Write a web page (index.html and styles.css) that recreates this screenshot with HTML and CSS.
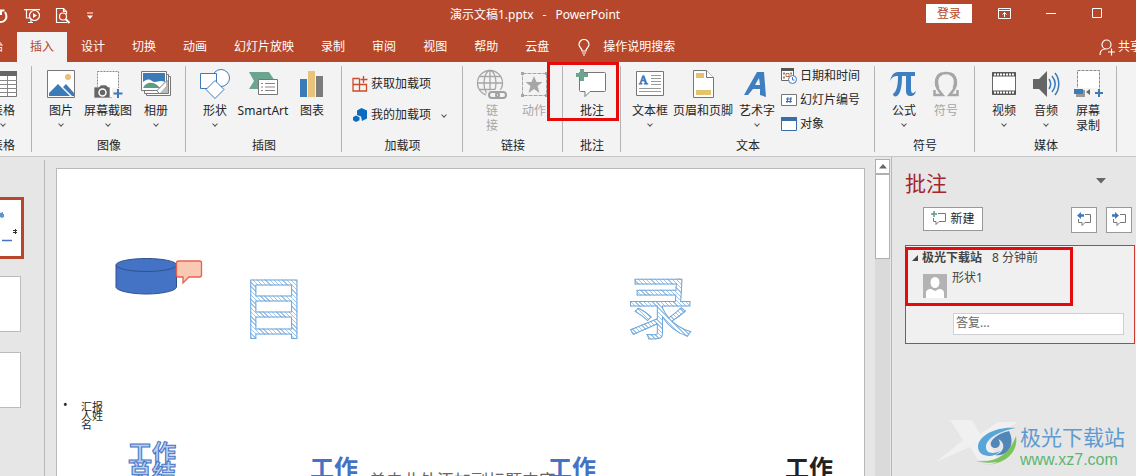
FILE: index.html
```html
<!DOCTYPE html>
<html lang="zh-CN">
<head>
<meta charset="utf-8">
<title>演示文稿1.pptx - PowerPoint</title>
<link rel="stylesheet" href="styles.css">
</head>
<body>
<header class="titlebar">
  <div class="quick">
    <button class="bare" aria-label="重复"><svg width="16" height="16" fill="none" stroke="#fff" stroke-width="2"><path d="M3 4C0 8 2 14 8 14s8-5 5-10M8 2.500h4.500M9 7V2"/></svg></button>
    <button class="bare" aria-label="放映"><svg width="17" height="16" fill="none" stroke="#fff" stroke-width="1.2"><path d="M0 1.6h16M2.5 2v8H6M4 14.5h5M7 11v3"/><circle cx="10.5" cy="7.500" r="5"/><path d="M9 5v5l4-2.500z" fill="#fff" stroke="none"/></svg></button>
    <button class="bare" aria-label="打印预览"><svg width="16" height="16" fill="none" stroke="#fff" stroke-width="1.2"><path d="M12 14.500H1.500v-14h7l3 3V6M8.500.500v3h3"/><circle cx="8" cy="8.500" r="3.500"/><path d="M10.500 11l4 4" stroke-width="2.200"/></svg></button>
    <button class="bare" aria-label="自定义"><svg width="8" height="8"><path d="M1 1h6" stroke="#fff"/><path d="M1 3.500h6L4 7z" fill="#fff"/></svg></button>
  </div>
  <div class="doc-title"><span>演示文稿1.pptx</span><span>-</span><span>PowerPoint</span></div>
  <button class="login">登录</button>
  <div class="window-buttons">
    <button class="bare" aria-label="功能区选项"><svg width="13" height="11" fill="none" stroke="#fff"><path d="M.5.500h12v10H.5zM.5 2.500h12M6.500 9V4.500M4.500 6.500l2-2 2 2"/></svg></button>
    <button class="bare" aria-label="最小化"><svg width="11" height="11"><path d="M0 5.500h10" stroke="#fff"/></svg></button>
    <button class="bare" aria-label="最大化"><svg width="11" height="11"><path d="M.5.500h9v9H.5z" fill="none" stroke="#fff"/></svg></button>
  </div>
</header>
<nav class="tabs">
  <button class="tab">开始</button>
  <button class="tab active">插入</button>
  <button class="tab">设计</button>
  <button class="tab">切换</button>
  <button class="tab">动画</button>
  <button class="tab">幻灯片放映</button>
  <button class="tab">录制</button>
  <button class="tab">审阅</button>
  <button class="tab">视图</button>
  <button class="tab">帮助</button>
  <button class="tab">云盘</button>
  <button class="tell"><svg width="13" height="17" fill="none" stroke="#fff" stroke-width="1.200"><path d="M4 12c0-3-3-3.500-3-6.500a5 5 0 0 1 10 0C11 8.500 8 9 8 12zM4 14h4M5 16h2"/></svg>操作说明搜索</button>
  <button class="share"><svg width="16" height="17" fill="none" stroke="#fff" stroke-width="1.200"><circle cx="7.500" cy="5.500" r="4.500"/><path d="M1 16c0-4 2.500-6 5.500-6M12.500 9.500v7M9 13h7"/></svg>共享</button>
</nav>
<section class="ribbon">
  <div class="group first">
    <div class="tools">
      <button class="tool"><svg width="32" height="32"><path d="M2.500 2.500h27v25h-27z" fill="#fff" stroke="#777"/><path d="M2 2h28v5H2z" fill="#666"/><path d="M2 11.500h28M2 15.500h28M2 19.500h28M2 23.500h28M11.500 7v20M20.500 7v20" stroke="#888"/></svg><span>表格</span><i class="chev"></i></button>
    </div>
    <div class="caption">表格</div>
  </div>
  <div class="group">
    <div class="tools">
      <button class="tool"><svg width="32" height="32"><path d="M2.500 1.500h27v27h-27z" fill="#fff" stroke="#777"/><circle cx="23" cy="8" r="3" fill="#eabf7a"/><path d="M4 27v-3l9-9 12 12zM18 18l3-3 8 9v3h-2z" fill="#3d7ab8"/></svg><span>图片</span><i class="chev"></i></button>
      <button class="tool wide"><svg width="32" height="32"><path d="M5.500 2.500h21v26h-21z" fill="#fff" stroke="#888" stroke-dasharray="2 1"/><path d="M2 18h5l2-2h5l2 2h2v11H2z" fill="#666" stroke="#f3f3f3" stroke-width=".7"/><circle cx="10.500" cy="23.500" r="3.500" fill="#666" stroke="#fff" stroke-width="1.500"/><path d="M20 19h10v11H20z" fill="#f3f3f3"/><path d="M26 20v9M21.500 24.500h9" stroke="#3d7ab8" stroke-width="2"/></svg><span>屏幕截图</span><i class="chev"></i></button>
      <button class="tool mid"><svg width="32" height="32"><path d="M6.500 7.500h24v19h-24z" fill="#fff" stroke="#777"/><path d="M4.500 5.500h24v19h-24z" fill="#fff" stroke="#777"/><path d="M1.500 2.500h25v19h-25z" fill="#fff" stroke="#777"/><path d="M3 4h22v9c-6-3-9 2-13-1s-6-1-9 1z" fill="#3d7ab8"/><path d="M3 19c4-8 12-5 14-3s3 2 3 3z" fill="#5b9c86"/><path d="M17 21.500l10-10v13h-8z" fill="#fff" stroke="#777"/><path d="M20 24l7-8v8z" fill="#bbb"/></svg><span>相册</span><i class="chev"></i></button>
    </div>
    <div class="caption">图像</div>
  </div>
  <div class="group">
    <div class="tools">
      <button class="tool"><svg width="32" height="32" fill="#fff" stroke="#3d7ab8"><circle cx="22" cy="9" r="8.500"/><path d="M1.500 4.500h16v15h-16z"/><path d="M16 11.500l9 9-9 9-9-9z"/></svg><span>形状</span><i class="chev"></i></button>
      <button class="tool smart"><svg width="32" height="32"><path d="M2 3h20l6 9-6 8H2l5-8z" fill="#6ba48f"/><path d="M11.500 10.500h19v15h-19z" fill="#fff" stroke="#777"/><path d="M14 14.500h2m2 0h10M14 18h2m2 0h10M14 21.500h2m2 0h10" stroke="#888"/></svg><span>SmartArt</span></button>
      <button class="tool mid"><svg width="32" height="32"><path d="M4 10h7v18H4z" fill="#3d7ab8"/><path d="M12 2h7v26h-7z" fill="#e9c37a"/><path d="M20 7h7v21h-7z" fill="#7c7c7c"/></svg><span>图表</span></button>
    </div>
    <div class="caption">插图</div>
  </div>
  <div class="group addins">
    <div class="rows loose">
      <button class="row"><svg width="16" height="16" fill="none" stroke="#d04a27" stroke-width="1.300"><path d="M7.500 2.500H1V15h13.500V8.500H1M7.500 2.500V15M11.500 0v7M8.500 3.500h7"/></svg>获取加载项</button>
      <button class="row"><svg width="16" height="16" fill="#0a6cc0"><path d="M9.500 1L15 3.500v8L10 14l-1-4.500L5 8V3.500z"/><path d="M4 8.500l3.500 1.700v3L4 15l-3-1.800v-3z"/></svg>我的加载项<i class="chev side"></i></button>
    </div>
    <div class="caption">加载项</div>
  </div>
  <div class="group">
    <div class="tools">
      <button class="tool off" disabled><svg width="32" height="32" fill="none" stroke="#a6a6a6" stroke-width="1.300"><circle cx="14" cy="14" r="12.500"/><ellipse cx="14" cy="14" rx="6" ry="12.500"/><path d="M14 1.500v25M1.500 14h25M3 7.500h22M3 20.500h16"/><g stroke="#f3f3f3" stroke-width="6"><rect x="13" y="24" width="10" height="5" rx="2.500"/><rect x="20" y="24" width="10" height="5" rx="2.500"/></g><g stroke="#a0a0a0" stroke-width="2"><rect x="13" y="23" width="10" height="6" rx="3"/><rect x="20" y="23" width="10" height="6" rx="3"/></g></svg><span>链<br>接</span></button>
      <button class="tool off" disabled><svg width="32" height="32" fill="#a6a6a6"><path d="M4.500 4.500h24v22h-24z" fill="none" stroke="#a6a6a6" stroke-dasharray="4 1"/><path d="M3 3h3v3H3zM27 3h3v3h-3zM3 25h3v3H3zM27 25h3v3h-3z"/><path d="M16 7l2.500 6h6l-5 4 2 7-5.500-4-5.500 4 2-7-5-4h6z"/></svg><span>动作</span></button>
    </div>
    <div class="caption">链接</div>
  </div>
  <div class="group marked">
    <div class="tools">
      <button class="tool"><svg width="32" height="32"><path d="M4.500 3.500h24a1 1 0 0 1 1 1v17a1 1 0 0 1-1 1H14l-5 5v-5H4.500a1 1 0 0 1-1-1v-18z" fill="#fff" stroke="#777"/><path d="M4 0h4v4h4v4H8v4H4V8H0V4h4z" fill="#6ba48f"/></svg><span>批注</span></button>
    </div>
    <div class="caption">批注</div>
  </div>
  <div class="group">
    <div class="tools">
      <button class="tool"><svg width="32" height="32"><path d="M2.500 2.500h27v24h-27z" fill="#fff" stroke="#777"/><text x="5" y="15" class="glyph-a">A</text><path d="M17 6.500h10M17 9.500h10M17 12.500h10M17 15.500h10M5 19.500h22M5 22.500h22" stroke="#999"/></svg><span>文本框</span><i class="chev"></i></button>
      <button class="tool hf"><svg width="32" height="32"><path d="M6.500 1.500h13l7 7v20h-20z" fill="#fff" stroke="#777"/><path d="M19.500 1.500v7h7" fill="#fff" stroke="#777"/><path d="M9 4h8v5H9zM9 21h15v5H9z" fill="#e3c36e"/></svg><span>页眉和页脚</span></button>
      <button class="tool mid"><svg width="32" height="32"><path d="M16 3h7l2 25-6-2v-6h-7l-5 6H3zM18 9l-4 7h5z" fill="#3d7fc1" fill-rule="evenodd"/></svg><span>艺术字</span><i class="chev"></i></button>
      <div class="rows text-rows">
        <button class="row"><svg width="16" height="16"><path d="M.5 1.500h12v11H.5z" fill="#fff" stroke="#666"/><path d="M0 0h13v3H0z" fill="#555"/><path d="M2 5.500h2m5 0h2M2 9.500h2" stroke="#888" stroke-width="2"/><path d="M5 5.500h3v3H5z" fill="none" stroke="#d07030"/><circle cx="11.500" cy="11.500" r="4" fill="#fff" stroke="#3d7ab8"/><path d="M11.500 9v3h2" fill="none" stroke="#3d7ab8"/></svg>日期和时间</button>
        <button class="row"><svg width="16" height="16"><path d="M.5 2.500h15v11H.5z" fill="#fff" stroke="#777"/><path d="M5 7h6M5 9.500h6M7 5l-1 6M10 5l-1 6" stroke="#3d6ab0"/></svg>幻灯片编号</button>
        <button class="row"><svg width="16" height="16"><path d="M.5 1.500h15v13H.5z" fill="#fff" stroke="#3c6ca8"/><path d="M0 1h16v4H0z" fill="#3c6ca8"/></svg>对象</button>
      </div>
    </div>
    <div class="caption">文本</div>
  </div>
  <div class="group">
    <div class="tools">
      <button class="tool"><svg width="32" height="32" fill="#3d7fc1"><path d="M2 12C4 5 6 3 11 3h16v4h-4v13c0 5 2 5 5 2-1 4-3 5-5 5-4 0-5-2-5-6V7h-4c0 9-1 17-5 20-2 1-4 0-4-2 4-3 5-9 5-18-4 0-6 1-8 5z"/></svg><span>公式</span><i class="chev"></i></button>
      <button class="tool off" disabled><svg width="32" height="32" fill="none" stroke="#a6a6a6"><path d="M4.500 21v5h8C9 22 6 19 6 14 6 8 10 4 16 4s10 4 10 10c0 5-3 8-6.500 12h8v-5" stroke-width="2.500"/><path d="M8 19C5 11 8 5 12 5M24 19c3-8 0-14-4-14" stroke-width="3"/></svg><span>符号</span></button>
    </div>
    <div class="caption">符号</div>
  </div>
  <div class="group">
    <div class="tools">
      <button class="tool"><svg width="32" height="32"><path d="M4.500 3.500h23v22h-23z" fill="#fff" stroke="#666"/><path d="M4 5.500h24M4 23.500h24" stroke="#555" stroke-width="4"/><path d="M6 5.500h21M6 23.500h21" stroke="#fff" stroke-width="2" stroke-dasharray="2 1"/></svg><span>视频</span><i class="chev"></i></button>
      <button class="tool"><svg width="32" height="32"><path d="M3 10h6l8-8v26l-8-8H3z" fill="#666"/><path d="M19 10c2 3 2 7 0 10M22 7c4 5 4 11 0 16M25 4c5 6 5 16 0 22" fill="none" stroke="#3d7ab8" stroke-width="1.500"/></svg><span>音频</span><i class="chev"></i></button>
      <button class="tool"><svg width="32" height="32"><path d="M5.500 1.500h22v22h-22z" fill="#fff" stroke="#888" stroke-dasharray="3 1"/><path d="M2 19h24v11H2z" fill="#f3f3f3"/><path d="M4 21h9v7H4z" fill="#999"/><path d="M2 20h9v5H2z" fill="#3d7ab8"/><path d="M14 23l4-3v6z" fill="#666"/><path d="M27 20v8M23 24h8" stroke="#3d7ab8" stroke-width="2"/></svg><span>屏幕<br>录制</span></button>
    </div>
    <div class="caption">媒体</div>
  </div>
</section>
<main class="work">
  <aside class="thumbs">
    <div class="thumb selected"><svg width="20" height="54"><path d="M0 13l3-1v2h1v3l-2 1-2-1z" fill="#5b93d3"/><path d="M2 40.500h10" stroke="#4472c4" stroke-width="1.500"/><path d="M13 30.500h4M13 32.500h4M15.500 29v5" stroke="#333"/></svg></div>
    <div class="thumb"></div>
    <div class="thumb"></div>
  </aside>
  <div class="canvas">
    <div class="slide">
      <svg class="shape" width="90" height="40"><path d="M1 8v22c0 3.500 14 7 30.500 7s30-3.500 30-7V8" fill="#4472c4" stroke="#2f528f"/><ellipse cx="31.300" cy="8" rx="30.300" ry="6.500" fill="#4472c4" stroke="#2f528f"/><path d="M63.500 4h21a2 2 0 0 1 2 2v12a2 2 0 0 1-2 2H74l-6 6v-6h-4.500a2 2 0 0 1-2-2V6a2 2 0 0 1 2-2z" fill="#f9c9b4" stroke="#e8614d" stroke-width="1.300"/></svg>
      <div class="hatch one">目</div>
      <div class="hatch two">录</div>
      <div class="dot">•</div>
      <div class="reporter">汇报<br>人姓<br>名</div>
      <div class="work-title outlined">工作<br>总结</div>
      <div class="hint">单击此处添加副标题内容</div>
      <div class="work-title second">工作</div>
      <div class="work-title third">工作</div>
      <div class="work-title fourth">工作</div>
    </div>
  </div>
  <div class="scroll">
    <button class="scroll-up" aria-label="向上滚动"><svg width="8" height="5"><path d="M0 4.500L4 0l4 4.500z" fill="#666"/></svg></button>
    <div class="scroll-thumb"></div>
  </div>
  <aside class="pane">
    <div class="pane-head"><h2>批注</h2><button class="bare" aria-label="窗格选项"><svg width="10" height="6"><path d="M0 0h10L5 5.500z" fill="#666"/></svg></button></div>
    <div class="pane-tools">
      <button class="new"><svg width="16" height="16" fill="none"><path d="M7 2.500h7.500v8H8l-3 3v-3H2.500V7" stroke="#777"/><path d="M3 0v6M0 3h6" stroke="#5b9c86" stroke-width="1.500"/></svg>新建</button>
      <button class="step" aria-label="上一条"><svg width="16" height="16" fill="none"><path d="M9 2.500h5.500v8H9l-3 3v-3H2.500V7" stroke="#777"/><path d="M1 3.500L5 0v2.200h3v2.600H5V7z" fill="#3d7ab8"/></svg></button>
      <button class="step" aria-label="下一条"><svg width="16" height="16" fill="none"><path d="M9 2.500h5.500v8H9l-3 3v-3H2.500V7" stroke="#777"/><path d="M8 3.500L4 0v2.200H1v2.600h3V7z" fill="#3d7ab8"/></svg></button>
    </div>
    <article class="comment">
      <div class="comment-head"><svg width="6" height="6"><path d="M6 0v6H0z" fill="#444"/></svg><b>极光下载站</b><span>8 分钟前</span></div>
      <div class="comment-body"><svg width="24" height="24"><path d="M0 0h24v24H0z" fill="#b3b3b3"/><ellipse cx="12" cy="8.500" rx="4.500" ry="5.500" fill="#fff"/><path d="M3 24v-5c0-3 2-4 5-4l4 2 4-2c3 0 5 1 5 4v5z" fill="#fff"/></svg><span>形状1</span></div>
      <input class="reply" type="text" placeholder="答复..." aria-label="答复">
    </article>
    <div class="brand">
      <svg width="86" height="52"><path d="M16 2h22l8 14L64 4h20L54 22l10 20H44l-8-13L2 44l27-22z" fill="#f3f3f3" opacity=".75"/><path d="M82 10C62 8 44 18 44 29c0 10 16 12 22 4-6 3-14 3-14-4 0-9 14-16 30-19z" fill="#58a5d8"/><path d="M75 13c-15 3-23 14-15 17 5 1 8-5 4-9 8 3 7 14-3 16 13 2 21-10 14-24z" fill="#5286b8"/><path d="M42 43c20 2 33-6 40-25 3 18-14 30-34 29 7 0 12-1 16-3-8 1-15 1-22-1z" fill="#7bc45c"/></svg>
      <div><strong>极光下载站</strong><span>www.xz7.com</span></div>
    </div>
  </aside>
</main>
</body>
</html>
```

FILE: styles.css
```css
*, *::after { box-sizing: border-box; }
body {
  margin: 0;
  height: 100vh;
  display: flex;
  flex-direction: column;
  overflow: hidden;
  background: #e6e6e6;
  color: #262626;
  font: 12px/16px "Noto Sans", "Noto Sans CJK SC", sans-serif;
}
button, input { font: inherit; color: inherit; }
button { border: 0; padding: 0; background: none; white-space: nowrap; }
svg { display: block; flex: none; }

.titlebar { flex: none; display: flex; height: 32px; background: #b7472a; color: #fff; }
.quick { flex: 0 0 450px; display: flex; align-items: center; gap: 14px; margin-left: -8px; padding-right: 8px; }
.quick .bare:first-child { margin-right: 2px; }
.quick .bare:last-child { margin-left: 1px; }
.doc-title { flex: 1; display: flex; gap: 9px; padding: 7px 0 0 8px; }
.login { align-self: flex-start; width: 46px; height: 19px; margin: 4px 26px 0 0; background: #fff; color: #b7472a; }
.window-buttons { display: flex; align-items: flex-start; gap: 35px; padding: 8px 33px 0 0; }

.tabs { flex: none; display: flex; gap: 1px; height: 30px; margin-left: -34px; background: #b7472a; color: #fff; }
.tab { padding: 0 13px; }
.tab.active { background: #f3f3f3; color: #b7472a; }
.tell, .share { display: flex; align-items: center; }
.tell { gap: 12px; margin-left: 15px; }
.share { gap: 3px; margin: 0 -6px 0 auto; }

.ribbon { flex: none; display: flex; height: 95px; padding: 4px 0; background: #f3f3f3; border-bottom: 1px solid #c8c8c8; }
.group { flex: none; position: relative; display: flex; flex-direction: column; justify-content: space-between; padding: 0 7px 0 8px; border-right: 1px solid #b4b4b4; }
.group.first { margin-left: -26px; }
.tools { display: flex; }
.tool { width: 42px; display: flex; flex-direction: column; align-items: center; padding-top: 3px; line-height: 15px; }
.tool span { padding-top: 2px; }
.tool.mid { width: 44px; }
.tool.wide { width: 52px; }
.tool.smart { width: 54px; }
.tool.hf { width: 64px; }
.off { color: #a6a6a6; }
.chev { width: 4px; height: 4px; margin-top: 4px; border: solid #555; border-width: 0 1px 1px 0; transform: rotate(45deg); }
.chev.side { margin: 0 0 0 8px; }
.caption { text-align: center; line-height: 12px; }
.rows { display: flex; flex-direction: column; padding-left: 2px; }
.text-rows { gap: 8px; width: 88px; padding-top: 2px; }
.loose { gap: 15px; padding-top: 10px; }
.row { display: flex; align-items: center; gap: 3px; height: 16px; }
.addins { width: 121px; }
.glyph-a { font: 12px "Liberation Serif", serif; fill: #3d7ab8; stroke: #3d7ab8; }
.marked::after { content: ""; position: absolute; inset: -4px 1px 31px -16px; border: 3px solid #e60a0a; z-index: 1; }

.work { flex: 1; min-height: 0; display: flex; }
.thumbs { flex: none; width: 45px; margin-top: 3px; padding-top: 37px; border-right: 1px solid #b9b9b9; }
.thumb { width: 21px; height: 56px; margin-bottom: 20px; background: #fff; border: solid #bbb; border-width: 1px 1px 1px 0; }
.thumb.selected { width: 24px; height: 62px; margin-bottom: 17px; border: solid #b7472a; border-width: 3px 3px 3px 0; }
.canvas { flex: 1; display: flex; padding: 11px 10px 0 11px; }
.slide { flex: 1; position: relative; overflow: hidden; background: #fff; border: 1px solid #b9b9b9; border-bottom: 0; }
.slide > * { position: absolute; white-space: nowrap; }
.shape { left: 58px; top: 88px; }
.hatch {
  top: 88px;
  font-size: 68px;
  line-height: 100px;
  color: transparent;
  background: repeating-linear-gradient(45deg, #9fc5e8 0 1px, #fff 1px 3px);
  -webkit-background-clip: text;
  background-clip: text;
  -webkit-text-stroke: 1px #6fa8dc;
}
.hatch.one { left: 183px; }
.hatch.two { left: 569px; }
.dot { left: 6px; top: 228px; }
.reporter { left: 24px; top: 233px; font-size: 11px; line-height: 9px; }
.work-title { font-size: 24px; line-height: 22px; font-weight: 700; color: #4472c4; }
.outlined { left: 71px; top: 274px; line-height: 20px; color: #b4cdf0; -webkit-text-stroke: 1px #4472c4; }
.second { left: 253px; top: 288px; }
.third { left: 491px; top: 288px; }
.fourth { left: 728px; top: 288px; color: #222; }
.hint { left: 312px; top: 302px; font-size: 17px; line-height: 20px; color: #666; }

.scroll { flex: none; width: 15px; margin-top: 2px; background: #dadada; }
.scroll-up { display: flex; align-items: center; justify-content: center; width: 15px; height: 15px; background: #fff; border: 1px solid #b0b0b0; }
.scroll-thumb { height: 85px; background: #fff; border: 1px solid #b0b0b0; }

.pane { flex: none; position: relative; width: 245px; margin-left: 1px; padding: 12px 1px 0 13px; border-left: 1px solid #b9b9b9; }
.pane-head { display: flex; justify-content: space-between; padding-right: 29px; }
.pane-head .bare { align-self: flex-start; padding-top: 9px; }
h2 { margin: 0; font-size: 21px; line-height: 28px; font-weight: 400; color: #a4262c; }
.pane-tools { display: flex; align-items: flex-start; gap: 9px; padding: 10px 3px 0 18px; }
.new, .step { display: flex; align-items: center; justify-content: center; background: #fff; border: 1px solid #999; }
.new { width: 60px; height: 24px; gap: 3px; margin-right: auto; }
.step { width: 26px; height: 26px; }
.comment { position: relative; margin-top: 12px; padding: 4px 10px 8px 6px; background: #f0f0f0; border: 1px solid #cf3a30; }
.comment::after { content: ""; position: absolute; left: -1px; top: 1px; width: 168px; height: 59px; border: 3px solid #e60a0a; }
.comment-head { display: flex; align-items: center; color: #444; }
.comment-head b { margin: 0 10px 0 4px; }
.comment-body { display: flex; gap: 5px; padding: 8px 0 0 11px; color: #444; }
.comment-body span { margin-top: -4px; }
.reply { display: block; width: 171px; height: 22px; margin: 15px 0 0 auto; padding: 0 2px 4px; background: #fff; border: 1px solid #d0d0d0; }
.reply::placeholder { color: #666; opacity: 1; }
.brand { position: absolute; right: 11px; bottom: 6px; display: flex; align-items: flex-end; }
.brand strong, .brand span { display: block; }
.brand strong { font-size: 21px; line-height: 26px; font-weight: 400; color: #5f9bd0; }
.brand span { font: 16px/20px "Liberation Sans", sans-serif; color: #5cb573; }
```
